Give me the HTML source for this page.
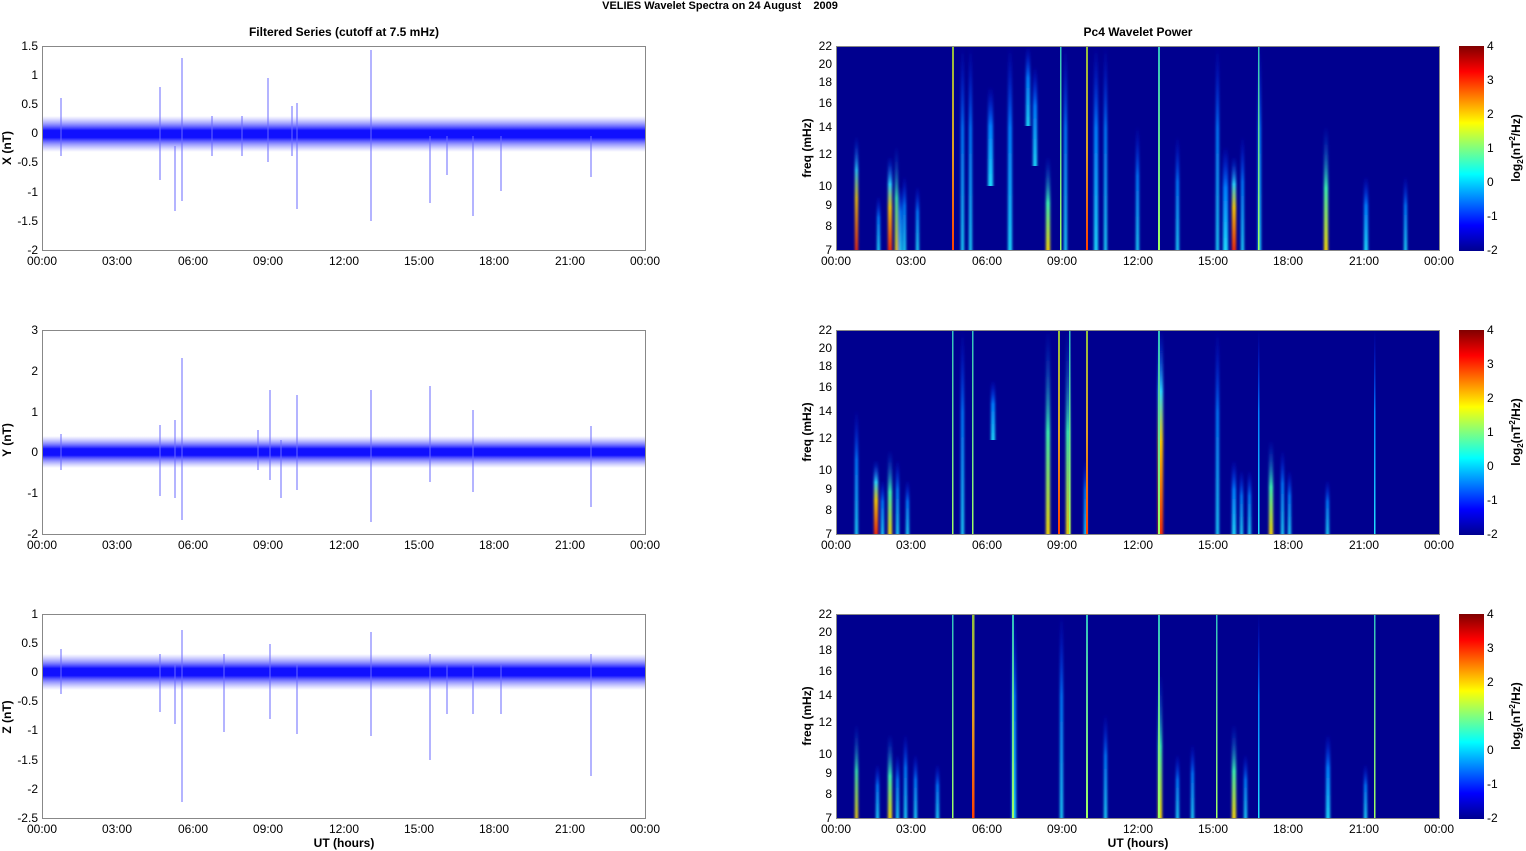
<!DOCTYPE html>
<html><head><meta charset="utf-8"><style>
html,body{margin:0;padding:0;background:#fff;width:1526px;height:851px;overflow:hidden}
text{font-family:"Liberation Sans",Arial,sans-serif;font-size:12px;fill:#000}
.b{font-weight:bold}
</style></head><body>
<svg width="1526" height="851" viewBox="0 0 1526 851" xmlns="http://www.w3.org/2000/svg">
<defs>
<linearGradient id="jet" x1="0" y1="1" x2="0" y2="0">
<stop offset="0" stop-color="#00008f"/><stop offset="0.125" stop-color="#0000ff"/><stop offset="0.375" stop-color="#00ffff"/><stop offset="0.625" stop-color="#ffff00"/><stop offset="0.875" stop-color="#ff0000"/><stop offset="1" stop-color="#800000"/>
</linearGradient>
<linearGradient id="gR" x1="0" y1="1" x2="0" y2="0"><stop offset="0" stop-color="#ff3000"/><stop offset="0.45" stop-color="#ffd000"/><stop offset="0.7" stop-color="#30e0ff"/><stop offset="1" stop-color="#0030ff" stop-opacity="0"/></linearGradient>
<linearGradient id="gY" x1="0" y1="1" x2="0" y2="0"><stop offset="0" stop-color="#ffe000"/><stop offset="0.5" stop-color="#40ffb0"/><stop offset="1" stop-color="#0040ff" stop-opacity="0"/></linearGradient>
<linearGradient id="gC" x1="0" y1="1" x2="0" y2="0"><stop offset="0" stop-color="#20e0ff"/><stop offset="0.6" stop-color="#0080ff"/><stop offset="1" stop-color="#0020ff" stop-opacity="0"/></linearGradient>
<linearGradient id="gL" x1="0" y1="1" x2="0" y2="0"><stop offset="0" stop-color="#ff4000"/><stop offset="0.5" stop-color="#e0a020"/><stop offset="1" stop-color="#90c040"/></linearGradient>
<linearGradient id="gG" x1="0" y1="1" x2="0" y2="0"><stop offset="0" stop-color="#a0ff60"/><stop offset="1" stop-color="#30c0c0"/></linearGradient>
<linearGradient id="band" x1="0" y1="0" x2="0" y2="1"><stop offset="0" stop-color="#8080ff" stop-opacity="0"/><stop offset="0.25" stop-color="#5050ff" stop-opacity="0.7"/><stop offset="0.4" stop-color="#1010ff"/><stop offset="0.6" stop-color="#1010ff"/><stop offset="0.75" stop-color="#5050ff" stop-opacity="0.7"/><stop offset="1" stop-color="#8080ff" stop-opacity="0"/></linearGradient>
<filter id="bl" x="-2" y="0" width="5" height="1"><feGaussianBlur stdDeviation="1.2 0"/></filter>
</defs>

<text x="720" y="9" text-anchor="middle" class="b" style="font-size:11px;white-space:pre" xml:space="preserve">VELIES Wavelet Spectra on 24 August    2009</text>
<text x="344" y="36" text-anchor="middle" class="b">Filtered Series (cutoff at 7.5 mHz)</text>
<text x="1138" y="36" text-anchor="middle" class="b">Pc4 Wavelet Power</text>

<!-- ===== Left panels ===== -->
<g transform="translate(42,46)">
 <rect x="0" y="70" width="603" height="36" fill="url(#band)"/>
 <g stroke="#6a6aff" stroke-width="1">
  <line x1="19" y1="52" x2="19" y2="110"/><line x1="118" y1="41" x2="118" y2="134"/><line x1="133" y1="100" x2="133" y2="165"/><line x1="140" y1="12" x2="140" y2="155"/>
  <line x1="226" y1="32" x2="226" y2="116"/><line x1="255" y1="57" x2="255" y2="163"/><line x1="329" y1="4" x2="329" y2="175"/><line x1="388" y1="90" x2="388" y2="157"/>
  <line x1="405" y1="90" x2="405" y2="129"/><line x1="431" y1="90" x2="431" y2="170"/><line x1="459" y1="90" x2="459" y2="145"/><line x1="549" y1="90" x2="549" y2="131"/>
  <line x1="200" y1="70" x2="200" y2="110"/><line x1="250" y1="60" x2="250" y2="110"/><line x1="170" y1="70" x2="170" y2="110"/>
 </g>
</g>
<g transform="translate(42,330)">
 <rect x="0" y="106" width="603" height="32" fill="url(#band)"/>
 <g stroke="#6a6aff" stroke-width="1">
  <line x1="19" y1="104" x2="19" y2="140"/><line x1="118" y1="95" x2="118" y2="166"/><line x1="133" y1="90" x2="133" y2="168"/><line x1="140" y1="28" x2="140" y2="190"/>
  <line x1="228" y1="60" x2="228" y2="150"/><line x1="239" y1="110" x2="239" y2="168"/><line x1="255" y1="65" x2="255" y2="160"/><line x1="329" y1="60" x2="329" y2="192"/>
  <line x1="388" y1="56" x2="388" y2="152"/><line x1="431" y1="80" x2="431" y2="162"/><line x1="549" y1="96" x2="549" y2="177"/><line x1="216" y1="100" x2="216" y2="140"/>
 </g>
</g>
<g transform="translate(42,614)">
 <rect x="0" y="40" width="603" height="36" fill="url(#band)"/>
 <g stroke="#6a6aff" stroke-width="1">
  <line x1="19" y1="35" x2="19" y2="80"/><line x1="118" y1="40" x2="118" y2="98"/><line x1="133" y1="50" x2="133" y2="110"/><line x1="140" y1="16" x2="140" y2="188"/>
  <line x1="182" y1="40" x2="182" y2="118"/><line x1="228" y1="30" x2="228" y2="105"/><line x1="255" y1="50" x2="255" y2="120"/><line x1="329" y1="18" x2="329" y2="122"/>
  <line x1="388" y1="40" x2="388" y2="146"/><line x1="405" y1="50" x2="405" y2="100"/><line x1="431" y1="50" x2="431" y2="100"/><line x1="459" y1="50" x2="459" y2="100"/><line x1="549" y1="40" x2="549" y2="162"/>
 </g>
</g>

<g fill="none" stroke="#888" stroke-width="1">
 <rect x="42.5" y="46.5" width="603" height="204"/>
 <rect x="42.5" y="330.5" width="603" height="204"/>
 <rect x="42.5" y="614.5" width="603" height="204"/>
</g>
<g font-size="12">
 <g text-anchor="end">
  <text x="38" y="50">1.5</text><text x="38" y="79">1</text><text x="38" y="108">0.5</text><text x="38" y="137">0</text><text x="38" y="166">-0.5</text><text x="38" y="196">-1</text><text x="38" y="225">-1.5</text><text x="38" y="254">-2</text>
  <text x="38" y="334">3</text><text x="38" y="375">2</text><text x="38" y="416">1</text><text x="38" y="456">0</text><text x="38" y="497">-1</text><text x="38" y="538">-2</text>
  <text x="38" y="618">1</text><text x="38" y="647">0.5</text><text x="38" y="676">0</text><text x="38" y="705">-0.5</text><text x="38" y="734">-1</text><text x="38" y="764">-1.5</text><text x="38" y="793">-2</text><text x="38" y="822">-2.5</text>
 </g>
 <text transform="translate(11,148) rotate(-90)" text-anchor="middle" class="b">X (nT)</text>
 <text transform="translate(11,440) rotate(-90)" text-anchor="middle" class="b">Y (nT)</text>
 <text transform="translate(11,717) rotate(-90)" text-anchor="middle" class="b">Z (nT)</text>
 <text transform="translate(811,148) rotate(-90)" text-anchor="middle" class="b">freq (mHz)</text>
 <text transform="translate(811,432) rotate(-90)" text-anchor="middle" class="b">freq (mHz)</text>
 <text transform="translate(811,716) rotate(-90)" text-anchor="middle" class="b">freq (mHz)</text>
</g>

<g text-anchor="middle">
 <g id="tl"><text x="42" y="265">00:00</text><text x="117" y="265">03:00</text><text x="193" y="265">06:00</text><text x="268" y="265">09:00</text><text x="344" y="265">12:00</text><text x="419" y="265">15:00</text><text x="494" y="265">18:00</text><text x="570" y="265">21:00</text><text x="645" y="265">00:00</text></g>
 <use href="#tl" y="284"/><use href="#tl" y="568"/>
 <use href="#tl" x="794"/><use href="#tl" x="794" y="284"/><use href="#tl" x="794" y="568"/>
 <text x="344" y="847" class="b">UT (hours)</text>
 <text x="1138" y="847" class="b">UT (hours)</text>
</g>

<g transform="translate(836,46)">
 <rect width="603" height="204" fill="#00008f"/>
 <g filter="url(#bl)">
  <rect x="19" y="90" width="3" height="114" fill="url(#gR)"/><rect x="41" y="150" width="3" height="54" fill="url(#gC)"/><rect x="52" y="110" width="4" height="94" fill="url(#gR)"/>
  <rect x="59" y="100" width="3" height="104" fill="url(#gY)"/><rect x="63" y="140" width="3" height="64" fill="url(#gC)"/><rect x="67" y="130" width="3" height="74" fill="url(#gC)"/><rect x="80" y="140" width="3" height="64" fill="url(#gC)"/>
  <rect x="125" y="0" width="3" height="204" fill="url(#gC)"/><rect x="133" y="0" width="3" height="204" fill="url(#gC)"/>
  <rect x="152" y="40" width="5" height="100" fill="url(#gC)"/><rect x="172" y="0" width="4" height="204" fill="url(#gC)"/><rect x="190" y="0" width="4" height="80" fill="url(#gC)"/>
  <rect x="197" y="20" width="4" height="100" fill="url(#gC)"/><rect x="210" y="110" width="4" height="94" fill="url(#gY)"/><rect x="228" y="0" width="3" height="204" fill="url(#gC)"/>
  <rect x="258" y="0" width="4" height="204" fill="url(#gC)"/><rect x="268" y="0" width="3" height="204" fill="url(#gC)"/><rect x="300" y="80" width="3" height="124" fill="url(#gC)"/>
  <rect x="340" y="90" width="3" height="114" fill="url(#gC)"/><rect x="380" y="0" width="3" height="204" fill="url(#gC)"/><rect x="387" y="100" width="5" height="104" fill="url(#gC)"/>
  <rect x="396" y="110" width="4" height="94" fill="url(#gR)"/><rect x="405" y="90" width="3" height="114" fill="url(#gC)"/><rect x="422" y="0" width="3" height="204" fill="url(#gC)"/>
  <rect x="488" y="80" width="4" height="124" fill="url(#gY)"/><rect x="528" y="130" width="4" height="74" fill="url(#gC)"/><rect x="568" y="130" width="3" height="74" fill="url(#gC)"/>
 </g>
 <rect x="116" y="0" width="2" height="204" fill="url(#gL)"/><rect x="224" y="0" width="1.5" height="204" fill="url(#gG)"/><rect x="250" y="0" width="2" height="204" fill="url(#gL)"/>
 <rect x="322" y="0" width="2" height="204" fill="url(#gG)"/><rect x="422" y="0" width="1.5" height="204" fill="url(#gG)"/>
</g>
<g transform="translate(836,330)">
 <rect width="603" height="204" fill="#00008f"/>
 <g filter="url(#bl)">
  <rect x="19" y="80" width="3" height="124" fill="url(#gC)"/><rect x="38" y="130" width="4" height="74" fill="url(#gR)"/><rect x="45" y="150" width="3" height="54" fill="url(#gC)"/>
  <rect x="52" y="120" width="4" height="84" fill="url(#gY)"/><rect x="60" y="130" width="3" height="74" fill="url(#gC)"/><rect x="70" y="150" width="3" height="54" fill="url(#gC)"/>
  <rect x="125" y="0" width="3" height="204" fill="url(#gC)"/><rect x="155" y="50" width="4" height="60" fill="url(#gC)"/>
  <rect x="210" y="0" width="4" height="204" fill="url(#gY)"/><rect x="230" y="0" width="4" height="204" fill="url(#gY)"/><rect x="248" y="130" width="3" height="74" fill="url(#gC)"/>
  <rect x="322" y="0" width="5" height="204" fill="url(#gR)"/><rect x="380" y="0" width="3" height="204" fill="url(#gC)"/>
  <rect x="396" y="130" width="4" height="74" fill="url(#gC)"/><rect x="404" y="140" width="3" height="64" fill="url(#gC)"/><rect x="412" y="140" width="3" height="64" fill="url(#gC)"/>
  <rect x="433" y="110" width="4" height="94" fill="url(#gY)"/><rect x="445" y="120" width="3" height="84" fill="url(#gC)"/><rect x="452" y="140" width="3" height="64" fill="url(#gC)"/><rect x="490" y="150" width="3" height="54" fill="url(#gC)"/>
 </g>
 <rect x="116" y="0" width="1.5" height="204" fill="url(#gG)"/><rect x="136" y="0" width="1.5" height="204" fill="url(#gG)"/>
 <rect x="222" y="0" width="2" height="204" fill="url(#gL)"/><rect x="233" y="0" width="1.5" height="204" fill="url(#gG)"/><rect x="250" y="0" width="2" height="204" fill="url(#gL)"/>
 <rect x="322" y="0" width="2" height="204" fill="url(#gG)"/><rect x="422" y="0" width="1.5" height="204" fill="url(#gC)"/><rect x="538" y="0" width="1.5" height="204" fill="url(#gC)"/>
</g>
<g transform="translate(836,614)">
 <rect width="603" height="204" fill="#00008f"/>
 <g filter="url(#bl)">
  <rect x="19" y="110" width="3" height="94" fill="url(#gY)"/><rect x="40" y="150" width="3" height="54" fill="url(#gC)"/><rect x="52" y="120" width="4" height="84" fill="url(#gY)"/>
  <rect x="60" y="140" width="3" height="64" fill="url(#gC)"/><rect x="68" y="120" width="3" height="84" fill="url(#gC)"/><rect x="78" y="140" width="3" height="64" fill="url(#gC)"/>
  <rect x="100" y="150" width="3" height="54" fill="url(#gC)"/><rect x="176" y="0" width="4" height="204" fill="url(#gC)"/><rect x="224" y="0" width="3" height="204" fill="url(#gC)"/>
  <rect x="268" y="100" width="3" height="104" fill="url(#gC)"/><rect x="322" y="60" width="4" height="144" fill="url(#gY)"/><rect x="340" y="140" width="3" height="64" fill="url(#gC)"/>
  <rect x="355" y="130" width="3" height="74" fill="url(#gC)"/><rect x="396" y="110" width="4" height="94" fill="url(#gY)"/><rect x="408" y="140" width="3" height="64" fill="url(#gC)"/>
  <rect x="490" y="120" width="4" height="84" fill="url(#gC)"/><rect x="528" y="150" width="3" height="54" fill="url(#gC)"/>
 </g>
 <rect x="116" y="0" width="1.5" height="204" fill="url(#gG)"/><rect x="136" y="0" width="2.5" height="204" fill="url(#gL)"/><rect x="176" y="0" width="2" height="204" fill="url(#gG)"/>
 <rect x="250" y="0" width="2" height="204" fill="url(#gG)"/><rect x="322" y="0" width="2" height="204" fill="url(#gG)"/><rect x="380" y="0" width="1.5" height="204" fill="url(#gG)"/>
 <rect x="422" y="0" width="1.5" height="204" fill="url(#gC)"/><rect x="538" y="0" width="1.5" height="204" fill="url(#gG)"/>
</g>

<g fill="none" stroke="#888" stroke-width="1">
 <rect x="836.5" y="46.5" width="603" height="204"/><rect x="836.5" y="330.5" width="603" height="204"/><rect x="836.5" y="614.5" width="603" height="204"/>
</g>
<g>
 <rect x="1459" y="46" width="25" height="205" fill="url(#jet)"/>
 <rect x="1459" y="330" width="25" height="205" fill="url(#jet)"/>
 <rect x="1459" y="614" width="25" height="205" fill="url(#jet)"/>
</g>

<g text-anchor="end">
 <g id="fl"><text x="832" y="50">22</text><text x="832" y="68">20</text><text x="832" y="86">18</text><text x="832" y="107">16</text><text x="832" y="131">14</text><text x="832" y="158">12</text><text x="832" y="190">10</text><text x="832" y="209">9</text><text x="832" y="230">8</text><text x="832" y="254">7</text></g>
 <use href="#fl" y="284"/><use href="#fl" y="568"/>
</g>
<g>
 <g id="cl"><text x="1487" y="50">4</text><text x="1487" y="84">3</text><text x="1487" y="118">2</text><text x="1487" y="152">1</text><text x="1487" y="186">0</text><text x="1487" y="220">-1</text><text x="1487" y="254">-2</text>
 <text transform="translate(1520,148) rotate(-90)" text-anchor="middle" class="b">log<tspan font-size="8" dy="3">2</tspan><tspan dy="-3">(nT</tspan><tspan font-size="8" dy="-5">2</tspan><tspan dy="5">/Hz)</tspan></text></g>
 <use href="#cl" y="284"/><use href="#cl" y="568"/>
</g>
</svg>
</body></html>
